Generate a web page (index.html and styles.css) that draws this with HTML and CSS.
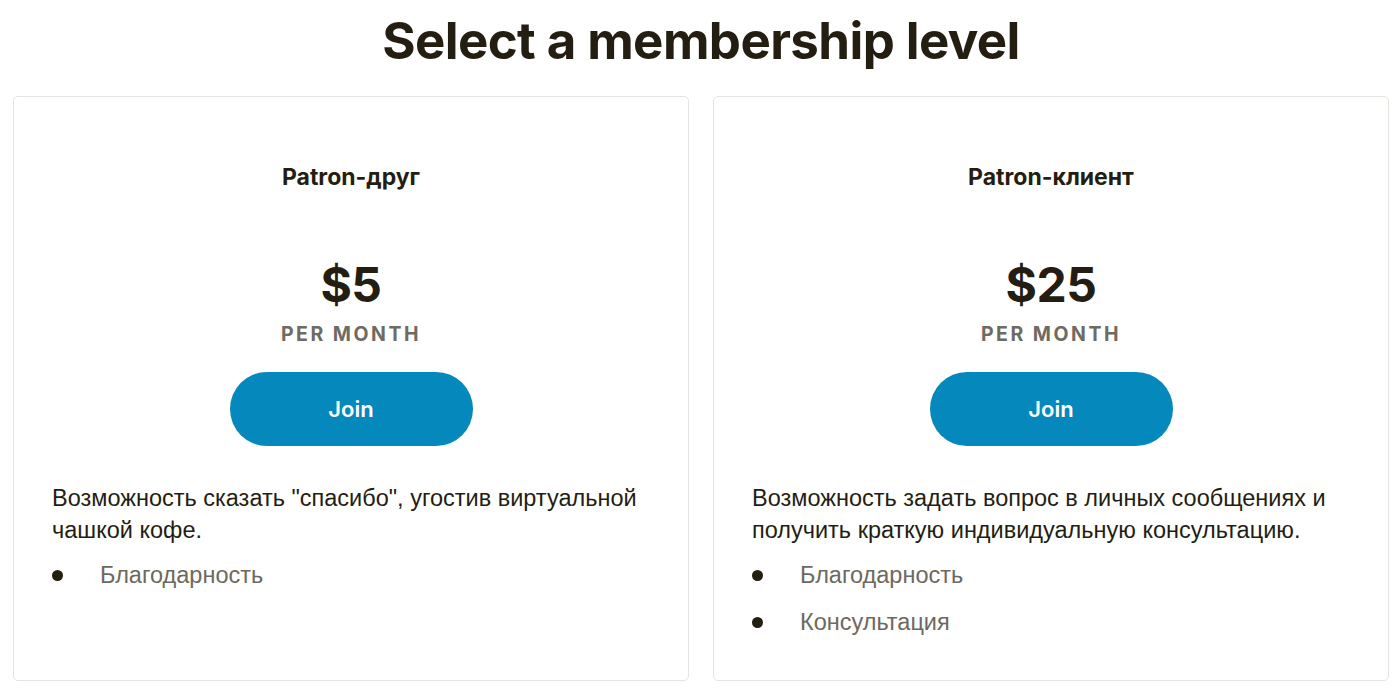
FILE: index.html
```html
<!DOCTYPE html>
<html lang="ru">
<head>
<meta charset="utf-8">
<title>Select a membership level</title>
<link rel="stylesheet" href="styles.css">
</head>
<body>
<main class="page">
  <h1 class="page-title">Select a membership level</h1>
  <div class="tiers">
    <section class="tier">
      <h2 class="tier-name">Patron-друг</h2>
      <div class="tier-price">$5</div>
      <div class="tier-period">PER MONTH</div>
      <button class="tier-join" type="button">Join</button>
      <p class="tier-desc">Возможность сказать "спасибо", угостив виртуальной чашкой кофе.</p>
      <ul class="tier-benefits">
        <li>Благодарность</li>
      </ul>
    </section>
    <section class="tier">
      <h2 class="tier-name">Patron-клиент</h2>
      <div class="tier-price">$25</div>
      <div class="tier-period">PER MONTH</div>
      <button class="tier-join" type="button">Join</button>
      <p class="tier-desc">Возможность задать вопрос в личных сообщениях и получить краткую индивидуальную консультацию.</p>
      <ul class="tier-benefits">
        <li>Благодарность</li>
        <li>Консультация</li>
      </ul>
    </section>
  </div>
</main>
</body>
</html>
```
FILE: styles.css
```css
* { box-sizing: border-box; }
html, body { margin: 0; padding: 0; background: #ffffff; }
body {
  font-family: Inter, "Noto Sans", sans-serif;
  color: #241e12;
}
.page { padding: 0 9px 0 13px; }
.page-title {
  margin: 0;
  height: 96px;
  display: flex;
  align-items: center;
  justify-content: center;
  padding-bottom: 16px;
  font-size: 51px;
  font-weight: 700;
  letter-spacing: -0.6px;
  color: #241e12;
}
.tiers {
  display: grid;
  grid-template-columns: 1fr 1fr;
  gap: 24px;
}
.tier {
  height: 585px;
  border: 1px solid #e6e4df;
  border-radius: 5px;
  padding: 64px 38px 0;
  display: flex;
  flex-direction: column;
  align-items: center;
}
.tier-name {
  margin: 0;
  font-size: 23px;
  font-weight: 700;
  line-height: 32px;
  color: #241e12;
}
.tier-price {
  margin-top: 64px;
  font-size: 48px;
  font-weight: 700;
  line-height: 56px;
  letter-spacing: -0.5px;
}
.tier-period {
  margin-top: 7px;
  font-size: 19.5px;
  font-weight: 700;
  letter-spacing: 2.5px;
  line-height: 28px;
  color: #6f6a62;
}
.tier-join {
  margin-top: 24px;
  width: 243px;
  height: 74px;
  border: none;
  border-radius: 37px;
  background: #0588bb;
  color: #ffffff;
  font-family: Inter, "Noto Sans", sans-serif;
  font-size: 22px;
  font-weight: 600;
  cursor: pointer;
}
.tier-desc {
  align-self: stretch;
  margin: 36px 0 0;
  font-family: "Liberation Sans", Arial, sans-serif;
  font-size: 23.5px;
  line-height: 32px;
  color: #241e12;
}
.tier-benefits {
  align-self: stretch;
  list-style: none;
  margin: 6px 0 0;
  padding: 0;
}
.tier-benefits li {
  position: relative;
  padding-left: 48px;
  font-family: "Liberation Sans", Arial, sans-serif;
  font-size: 23.5px;
  line-height: 47px;
  color: #6d6860;
}
.tier-benefits li::before {
  content: "";
  position: absolute;
  left: 0;
  top: 18px;
  width: 11px;
  height: 11px;
  border-radius: 50%;
  background: #241e12;
}
```
